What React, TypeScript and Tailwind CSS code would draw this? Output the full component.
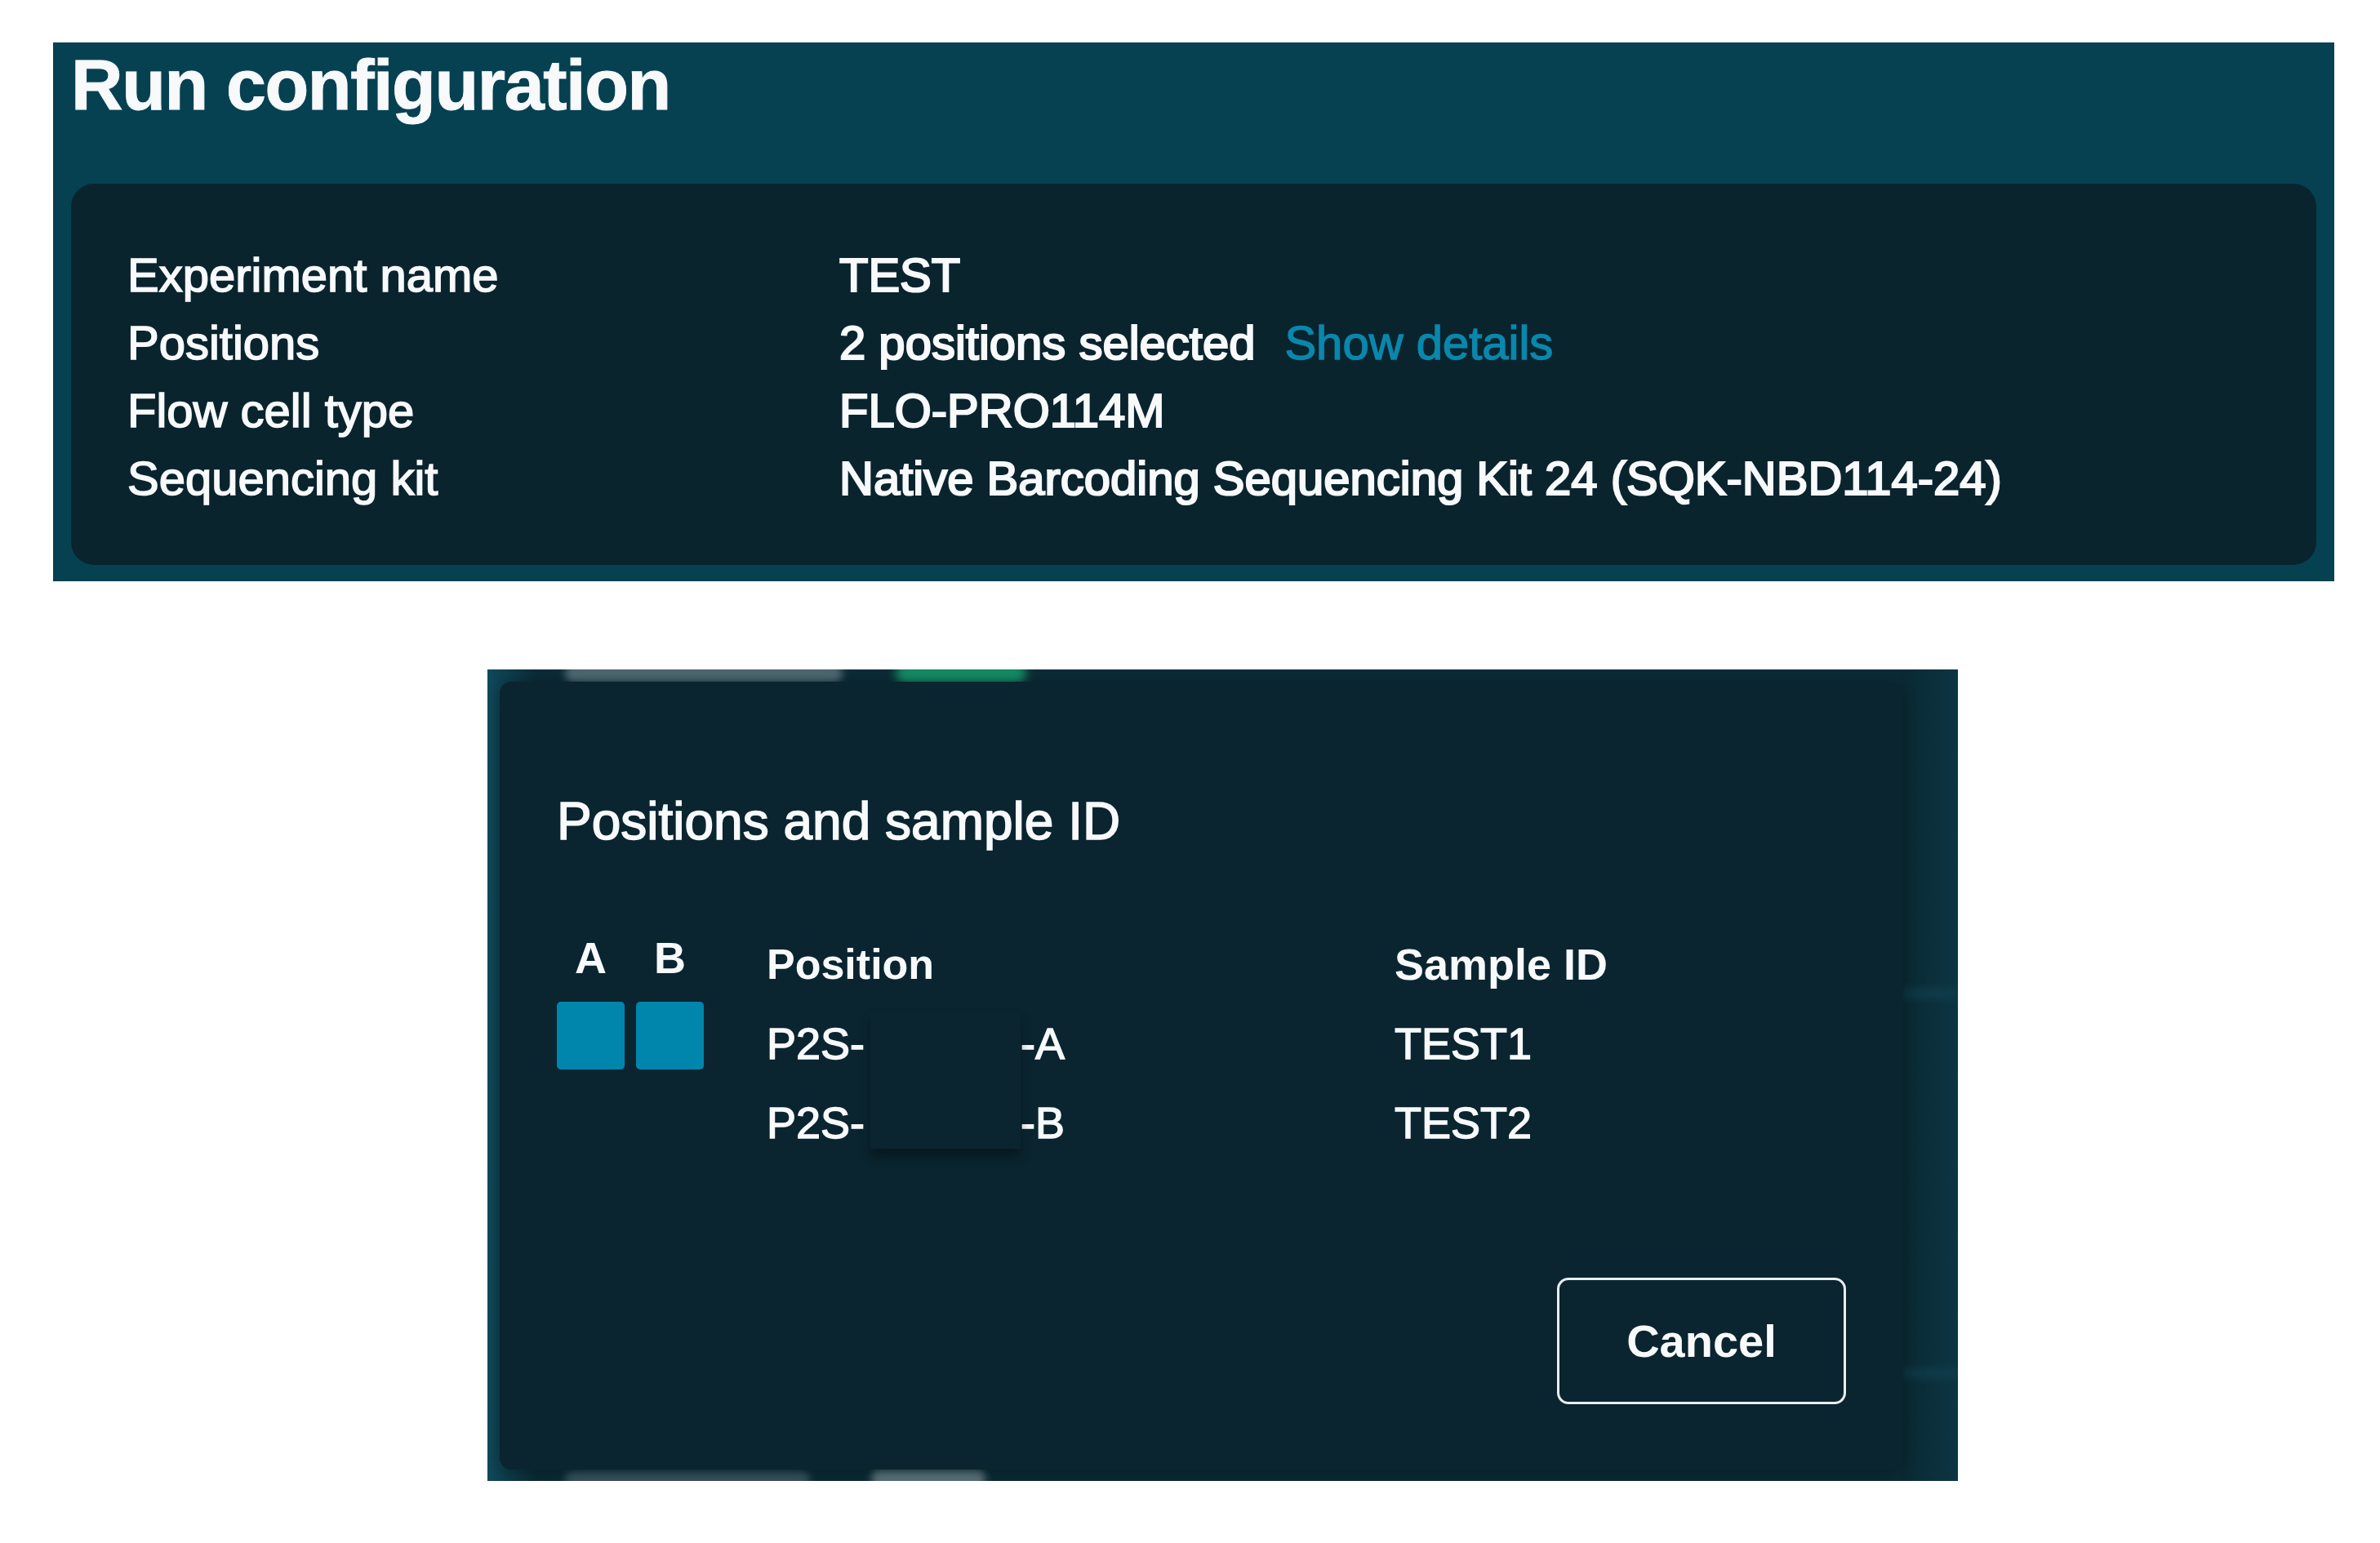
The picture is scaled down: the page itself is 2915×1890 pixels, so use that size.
import React from 'react';

const details = [
  { label: 'Experiment name', value: 'TEST' },
  { label: 'Positions', value: '2 positions selected', link: 'Show details' },
  { label: 'Flow cell type', value: 'FLO-PRO114M' },
  { label: 'Sequencing kit', value: 'Native Barcoding Sequencing Kit 24 (SQK-NBD114-24)' },
];

const samples = [
  { pos: 'A', id: 'TEST1' },
  { pos: 'B', id: 'TEST2' },
];

export default function App() {
  return (
    <div className="min-h-screen bg-white pb-[76px] pt-[52px] font-['Liberation_Sans',Arial,sans-serif] text-[#f7f9fa]">
      {/* Run configuration summary */}
      <div className="ml-[65px] flex h-[660px] w-[2794px] flex-col bg-[#064152] px-[22px] pb-[20px] pt-[8px]">
        <h1 className="text-[88px] font-bold leading-[88px] tracking-[-1.4px] [-webkit-text-stroke:1px_#f7f9fa]">Run configuration</h1>
        <div className="mt-[77px] flex-1 rounded-[28px] bg-[#0a242e] px-[69px] pt-[70px]">
          <div className="grid grid-cols-[872px_1fr] text-[58px] leading-[83px]">
            {details.map(d => (
              <React.Fragment key={d.label}>
                <div className="[-webkit-text-stroke:1.6px_#f7f9fa]">{d.label}</div>
                <div className="flex [-webkit-text-stroke:2.2px_#f7f9fa]">
                  <span>{d.value}</span>
                  {d.link && (
                    <span className="ml-[36px] text-[#0a87ad] [-webkit-text-stroke:1.4px_#0a87ad]">{d.link}</span>
                  )}
                </div>
              </React.Fragment>
            ))}
          </div>
        </div>
      </div>

      {/* Positions dialog over the blurred page */}
      <div className="relative ml-[597px] mt-[108px] h-[994px] w-[1801px] overflow-hidden bg-[#0b2c37] pl-[15px] pt-[15px]">
        <div className="absolute left-0 top-0 h-full w-[60px] bg-gradient-to-r from-[#0f4b5c] to-transparent" />
        <div className="absolute right-0 top-0 h-full w-[70px] bg-gradient-to-l from-[#0c3542] to-[#0a2a34]" />
        <div className="absolute left-[95px] top-[-6px] h-[22px] w-[340px] rounded-full bg-[#7d949c] opacity-60 blur-[5px]" />
        <div className="absolute left-[500px] top-[-8px] h-[26px] w-[160px] rounded-full bg-[#169a6c] opacity-90 blur-[6px]" />
        <div className="absolute bottom-[-8px] left-[95px] h-[20px] w-[300px] rounded-full bg-[#7d949c] opacity-40 blur-[5px]" />
        <div className="absolute bottom-[-8px] left-[470px] h-[22px] w-[140px] rounded-full bg-[#93a7ad] opacity-60 blur-[5px]" />
        <div className="absolute right-0 top-[390px] h-[14px] w-[70px] bg-[#12414f] opacity-60 blur-[4px]" />
        <div className="absolute right-0 top-[855px] h-[14px] w-[70px] bg-[#12414f] opacity-60 blur-[4px]" />

        <div className="relative flex h-[965px] w-[1719px] flex-col rounded-[14px] bg-[#0a2530] px-[70px] pb-[80px] pt-[134px] shadow-[0_4px_24px_rgba(0,0,0,0.35)]">
          <h2 className="text-[64px] leading-[74px] [-webkit-text-stroke:1.6px_#f7f9fa]">Positions and sample ID</h2>

          <div className="mt-[90px] flex">
            <div className="flex w-[180px] flex-col">
              <div className="flex gap-[14px] text-[54px] font-bold leading-[80px]">
                {samples.map(s => (
                  <span key={s.pos} className="w-[83px] text-center">{s.pos}</span>
                ))}
              </div>
              <div className="mt-[14px] flex gap-[14px]">
                {samples.map(s => (
                  <div key={s.pos} className="h-[83px] w-[83px] rounded-[5px] bg-[#0086ad]" />
                ))}
              </div>
            </div>

            <div className="relative ml-[77px] w-[769px] text-[54px] leading-[97px]">
              <div className="text-[52px] font-bold">Position</div>
              {samples.map(s => (
                <div key={s.pos} className="flex [-webkit-text-stroke:1.4px_#f7f9fa]">
                  <span>P2S-</span>
                  <span className="w-[191px]" />
                  <span>-{s.pos}</span>
                </div>
              ))}
              {/* redacted serial */}
              <div className="absolute left-[127px] top-[106px] h-[168px] w-[184px] bg-[#0a2530] shadow-[0_10px_12px_rgba(0,0,0,0.35)]" />
            </div>

            <div className="text-[54px] leading-[97px]">
              <div className="font-bold">Sample ID</div>
              {samples.map(s => (
                <div key={s.id} className="[-webkit-text-stroke:1.4px_#f7f9fa]">{s.id}</div>
              ))}
            </div>
          </div>

          <div className="mt-auto flex justify-end">
            <button className="h-[155px] w-[354px] rounded-[14px] border-[3px] border-[#e8eef0] text-[56px] font-bold">
              Cancel
            </button>
          </div>
        </div>
      </div>
    </div>
  );
}
